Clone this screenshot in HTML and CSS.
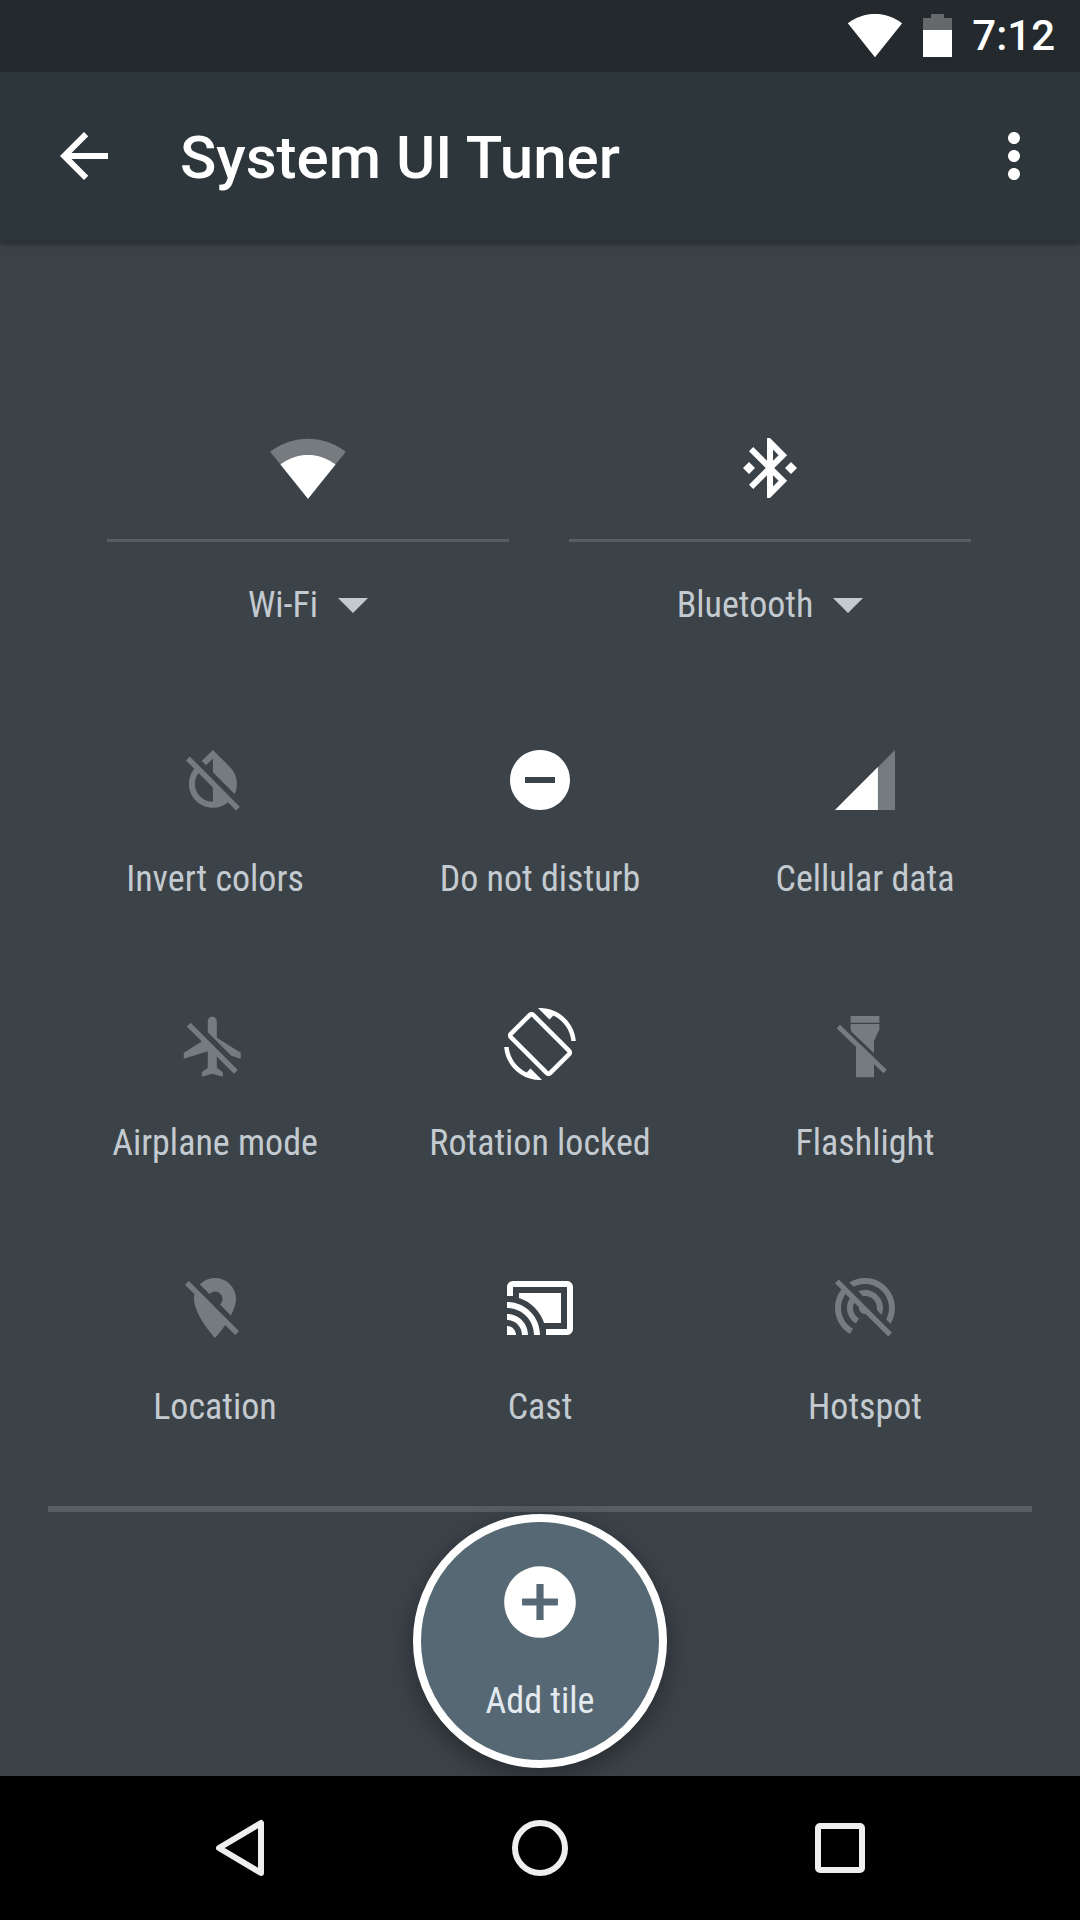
FILE: index.html
```html
<!DOCTYPE html>
<html lang="en">
<head>
  <meta charset="UTF-8">
  <meta name="viewport" content="width=device-width, initial-scale=1.0">
  <title>System UI Tuner</title>
  <link rel="stylesheet" href="styles.css">
</head>
<body>
  <div class="status-bar">
    <svg class="status-wifi" viewBox="0 0 24 24"><path d="M12.01 21.49L23.64 7c-.45-.34-4.93-4-11.64-4C5.28 3 .81 6.66.36 7l11.63 14.49.01.01.01-.01z"/></svg>
    <svg class="status-battery" viewBox="0 0 29 43"><path class="dim" d="M8 0h13v4h8v12H0V4h8z"/><path d="M0 16h29v27H0z"/></svg>
    <span class="status-time">7:12</span>
  </div>

  <header class="app-bar">
    <svg class="icon" viewBox="0 0 24 24"><path d="M20 11H7.83l5.59-5.59L12 4l-8 8 8 8 1.41-1.41L7.83 13H20v-2z"/></svg>
    <h1 class="app-title">System UI Tuner</h1>
    <svg class="icon" viewBox="0 0 24 24"><path d="M12 8c1.1 0 2-.9 2-2s-.9-2-2-2-2 .9-2 2 .9 2 2 2zm0 2c-1.1 0-2 .9-2 2s.9 2 2 2 2-.9 2-2-.9-2-2-2zm0 6c-1.1 0-2 .9-2 2s.9 2 2 2 2-.9 2-2-.9-2-2-2z"/></svg>
  </header>

  <main class="panel">
    <div class="wide-tiles">
      <div class="wide-tile">
        <svg class="icon icon-wifi" viewBox="0 0 24 24"><path class="dim" d="M12.01 21.49L23.64 7c-.45-.34-4.93-4-11.64-4C5.28 3 .81 6.66.36 7l11.63 14.49.01.01.01-.01z"/><path d="M3.53 10.95l8.46 10.54.01.01.01-.01 8.46-10.54C20.04 10.62 16.81 8 12 8c-4.81 0-8.04 2.62-8.47 2.95z"/></svg>
        <div class="wide-rule"></div>
        <div class="wide-label"><span class="label-text">Wi-Fi</span><span class="caret"></span></div>
      </div>
      <div class="wide-tile">
        <svg class="icon" viewBox="0 0 24 24"><path d="M7 12l-2-2-2 2 2 2 2-2zm10.71-4.29L12 2h-1v7.59L6.41 5 5 6.41 10.59 12 5 17.59 6.41 19 11 14.41V22h1l5.71-5.71-4.3-4.29 4.3-4.29zM13 5.83l1.88 1.88L13 9.59V5.83zm1.88 10.46L13 18.17v-3.76l1.88 1.88zM19 10l-2 2 2 2 2-2-2-2z"/></svg>
        <div class="wide-rule"></div>
        <div class="wide-label"><span class="label-text">Bluetooth</span><span class="caret"></span></div>
      </div>
    </div>

    <div class="tile-grid">
      <div class="tile">
        <svg class="icon off" viewBox="0 0 24 24"><path transform="translate(-.7 -.3)" d="M20.65 20.87l-2.35-2.35-6.3-6.29-3.56-3.57-1.42-1.41L4.27 4.5 3 5.77l2.78 2.78c-2.55 3.14-2.36 7.76.56 10.69C7.9 20.8 9.95 21.58 12 21.58c1.79 0 3.57-.59 5.03-1.78l2.7 2.7L21 21.23l-.35-.36zM12 19.59c-1.6 0-3.11-.62-4.24-1.76C6.62 16.69 6 15.19 6 13.59c0-1.32.43-2.57 1.21-3.6L12 14.77v4.82zM12 5.1v4.58l7.25 7.26c1.37-2.96.84-6.57-1.6-9.01L12 2.27l-3.7 3.7 1.41 1.41L12 5.1z"/></svg>
        <span class="label-text">Invert colors</span>
      </div>
      <div class="tile">
        <svg class="icon" viewBox="0 0 24 24"><path d="M12 2C6.48 2 2 6.48 2 12s4.48 10 10 10 10-4.48 10-10S17.52 2 12 2zm5 11H7v-2h10v2z"/></svg>
        <span class="label-text">Do not disturb</span>
      </div>
      <div class="tile">
        <svg class="icon" viewBox="0 0 24 24"><path class="dim" d="M2 22h20V2z"/><path d="M16.3 7.7L2 22h14.3z"/></svg>
        <span class="label-text">Cellular data</span>
      </div>
      <div class="tile">
        <svg class="icon off" viewBox="0 0 24 24"><path transform="translate(-.4 .9)" d="M13 9V3.5c0-.83-.67-1.5-1.5-1.5S10 2.67 10 3.5v3.68l7.83 7.83L21 16v-2l-8-5zM3 5.27l4.99 4.99L2 14v2l8-2.5V19l-2 1.5V22l3.5-1 3.5 1v-1.5L13 19v-3.73L18.73 21 20 19.73 4.27 4 3 5.27z"/></svg>
        <span class="label-text">Airplane mode</span>
      </div>
      <div class="tile">
        <svg class="icon" viewBox="0 0 24 24"><path d="M16.48 2.52c3.27 1.55 5.61 4.72 5.97 8.48h1.5C23.44 4.84 18.29 0 12 0l-.66.03 3.81 3.81 1.33-1.32zm-6.25-.77c-.59-.59-1.54-.59-2.12 0L1.75 8.11c-.59.59-.59 1.54 0 2.12l12.02 12.02c.59.59 1.54.59 2.12 0l6.36-6.36c.59-.59.59-1.54 0-2.12L10.23 1.75zm4.6 19.44L2.81 9.17l6.36-6.36 12.02 12.02-6.36 6.36zm-7.31.29C4.25 19.94 1.91 16.76 1.55 13H.05C.56 19.16 5.71 24 12 24l.66-.03-3.81-3.81-1.33 1.32z"/></svg>
        <span class="label-text">Rotation locked</span>
      </div>
      <div class="tile">
        <svg class="icon off" viewBox="0 0 24 24"><path d="M7.2 2.7h9.6v2.2H7.2zM7.2 5.3h9.6v1.9L15 11v4.1L7.5 7.9l-.3-.7zM9 13l6 5.7v4.4H9zM2.55 6.78l1.1-1.16 15.6 15-1.1 1.16z"/></svg>
        <span class="label-text">Flashlight</span>
      </div>
      <div class="tile">
        <svg class="icon off" viewBox="0 0 24 24"><path d="M12 6.5c1.38 0 2.5 1.12 2.5 2.5 0 .74-.33 1.39-.83 1.85l3.63 3.63c.98-1.86 1.7-3.8 1.7-5.48 0-3.87-3.13-7-7-7-1.98 0-3.76.83-5.04 2.15l3.19 3.19c.46-.52 1.11-.84 1.85-.84zm4.37 9.6l-4.63-4.63-.11-.11L3.27 3 2 4.27l3.18 3.18C5.07 7.95 5 8.47 5 9c0 5.25 7 13 7 13s1.67-1.85 3.38-4.35L18.73 21 20 19.73l-3.63-3.63z"/></svg>
        <span class="label-text">Location</span>
      </div>
      <div class="tile">
        <svg class="icon" viewBox="0 0 24 24"><path d="M21 3H3c-1.1 0-2 .9-2 2v3h2V5h18v14h-7v2h7c1.1 0 2-.9 2-2V5c0-1.1-.9-2-2-2zM1 18v3h3c0-1.66-1.34-3-3-3zm0-4v2c2.76 0 5 2.24 5 5h2c0-3.87-3.13-7-7-7zm0-4v2c4.97 0 9 4.03 9 9h2c0-6.08-4.93-11-11-11z"/><path d="M19 7H5v1.63c3.96 1.28 7.09 4.41 8.37 8.37H19V7z"/></svg>
        <span class="label-text">Cast</span>
      </div>
      <div class="tile">
        <svg class="icon off" viewBox="0 0 24 24"><path d="M17.56 14.24c.28-.69.44-1.45.44-2.24 0-3.31-2.69-6-6-6-.79 0-1.55.16-2.24.44l1.62 1.62c.2-.03.41-.06.62-.06 2.21 0 4 1.79 4 4 0 .21-.02.42-.05.63l1.61 1.61zM12 4c4.42 0 8 3.58 8 8 0 1.35-.35 2.62-.95 3.74l1.47 1.47C21.46 15.69 22 13.91 22 12c0-5.52-4.48-10-10-10-1.91 0-3.69.55-5.21 1.47l1.46 1.46C9.37 4.34 10.65 4 12 4zM3.27 2.5L2 3.77l2.1 2.1C2.79 7.57 2 9.69 2 12c0 3.7 2.01 6.92 4.99 8.65l1-1.73C5.61 17.53 4 14.96 4 12c0-1.76.57-3.38 1.53-4.69l1.43 1.44C6.36 9.68 6 10.8 6 12c0 2.22 1.21 4.15 3 5.19l1-1.74c-1.19-.7-2-1.97-2-3.45 0-.65.17-1.25.44-1.79l1.58 1.58L10 12c0 1.1.9 2 2 2l.21-.02.01.01 7.51 7.51L21 20.23 4.27 3.5l-1-1z"/></svg>
        <span class="label-text">Hotspot</span>
      </div>
    </div>

    <div class="tray">
      <div class="add-tile">
        <svg class="icon-add" viewBox="0 0 24 24"><path d="M12 2C6.48 2 2 6.48 2 12s4.48 10 10 10 10-4.48 10-10S17.52 2 12 2zm5 11h-4v4h-2v-4H7v-2h4V7h2v4h4v2z"/></svg>
        <span class="label-text add-label">Add tile</span>
      </div>
    </div>
  </main>

  <nav class="nav-bar">
    <svg class="nav-icon" viewBox="0 0 72 72"><path d="M57 11V61L15 36z"/></svg>
    <svg class="nav-icon" viewBox="0 0 72 72"><circle cx="36" cy="36" r="25"/></svg>
    <svg class="nav-icon" viewBox="0 0 72 72"><rect x="14" y="14" width="44" height="44" rx="2"/></svg>
  </nav>
</body>
</html>
```

FILE: styles.css
```css
body {
  margin: 0;
  width: 1080px;
  height: 1920px;
  display: flex;
  flex-direction: column;
  overflow: hidden;
  font-family: Roboto, "Noto Sans", sans-serif;
  color: #fff;
  background: #3b4248;
}

svg {
  display: block;
  fill: #fff;
}

.dim {
  opacity: 0.3;
}

/* Status bar */
.status-bar {
  height: 72px;
  flex: none;
  display: flex;
  align-items: flex-start;
  justify-content: flex-end;
  background: #23292d;
}

.status-wifi {
  width: 56px;
  height: 56px;
  margin-top: 7px;
}

.status-battery {
  width: 29px;
  height: 43px;
  margin: 14px 0 0 20px;
}

.status-time {
  margin: 11px 25px 0 20px;
  font-size: 42px;
  font-weight: 500;
  line-height: 50px;
}

/* App bar */
.app-bar {
  height: 168px;
  flex: none;
  display: flex;
  align-items: center;
  padding: 0 30px 0 48px;
  background: #2c363b;
  box-shadow: 0 5px 2px rgba(0, 0, 0, 0.2), 0 10px 12px rgba(0, 0, 0, 0.05);
  position: relative;
}

.app-title {
  flex: 1;
  margin: 2px 0 0 60px;
  font-size: 60px;
  font-weight: 500;
}

.icon {
  width: 72px;
  height: 72px;
  flex: none;
}

.icon-wifi {
  width: 78px;
  height: 78px;
  margin: -3px 0;
}

.off {
  opacity: 0.3;
}

/* Tiles */
.panel {
  flex: 1;
  display: flex;
  flex-direction: column;
}

.label-text {
  font-size: 36px;
  line-height: 48px;
  font-stretch: 75%;
  color: #c3cad0;
  white-space: nowrap;
}

.wide-tiles {
  display: flex;
  justify-content: center;
  gap: 60px;
  margin: 192px 0 0 -2px;
}

.wide-tile {
  width: 402px;
  display: flex;
  flex-direction: column;
  align-items: center;
}

.wide-rule {
  width: 100%;
  height: 3px;
  margin: 35px 0 0;
  background: #565d63;
}

.wide-label {
  display: flex;
  align-items: center;
  margin-top: 39px;
}

.caret {
  width: 0;
  height: 0;
  margin-left: 20px;
  border-left: 15px solid transparent;
  border-right: 15px solid transparent;
  border-top: 15px solid #c3cad0;
}

.tile-grid {
  display: grid;
  grid-template-columns: repeat(3, 325px);
  grid-auto-rows: 158px;
  row-gap: 106px;
  justify-content: center;
  margin-top: 115px;
}

.tile {
  display: flex;
  flex-direction: column;
  align-items: center;
  gap: 39px;
}

.tray {
  margin: 76px 48px 0;
  padding-top: 2px;
  border-top: 6px solid #565d63;
  display: flex;
  justify-content: center;
}

.add-tile {
  width: 254px;
  height: 254px;
  box-sizing: border-box;
  display: flex;
  flex-direction: column;
  align-items: center;
  padding-top: 37px;
  border: 8px solid #fff;
  border-radius: 50%;
  background: #566873;
  box-shadow: 0 8px 24px rgba(0, 0, 0, 0.35);
}

.icon-add {
  width: 86px;
  height: 86px;
}

.add-label {
  margin-top: 32px;
  color: #e4ebf0;
}

/* Navigation bar */
.nav-bar {
  height: 144px;
  flex: none;
  display: grid;
  grid-template-columns: repeat(3, 300px);
  justify-content: center;
  justify-items: center;
  align-items: center;
  background: #000;
  position: relative;
}

.nav-icon {
  width: 72px;
  height: 72px;
  fill: none;
  stroke: #eee;
  stroke-width: 6;
  stroke-linejoin: round;
}
```
